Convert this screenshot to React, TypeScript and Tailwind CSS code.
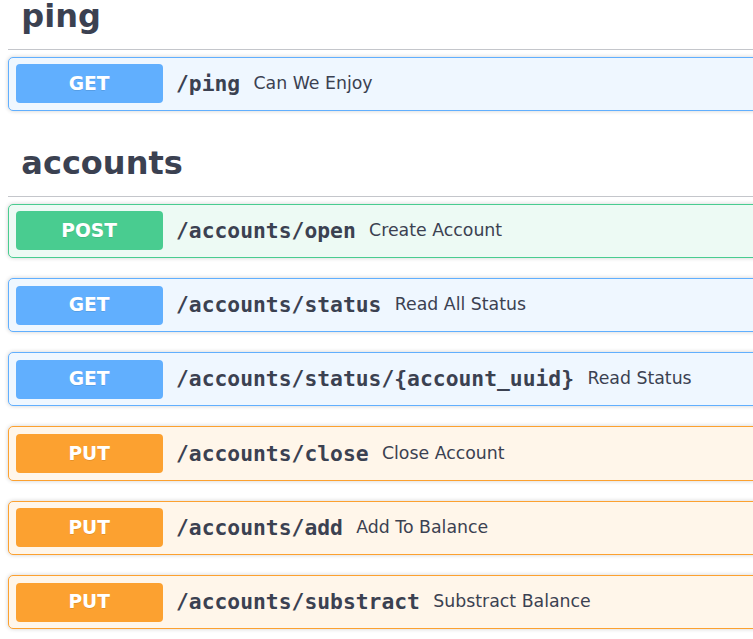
import React from "react";

type Method = "GET" | "POST" | "PUT";

const tone: Record<Method, { box: string; badge: string }> = {
  GET: { box: "border-[#61affe] bg-[#eff7ff]", badge: "bg-[#61affe]" },
  POST: { box: "border-[#49cc90] bg-[#edfaf4]", badge: "bg-[#49cc90]" },
  PUT: { box: "border-[#fca130] bg-[#fff6ea]", badge: "bg-[#fca130]" },
};

const sections: { tag: string; ops: { method: Method; path: string; summary: string }[] }[] = [
  { tag: "ping", ops: [{ method: "GET", path: "/ping", summary: "Can We Enjoy" }] },
  {
    tag: "accounts",
    ops: [
      { method: "POST", path: "/accounts/open", summary: "Create Account" },
      { method: "GET", path: "/accounts/status", summary: "Read All Status" },
      { method: "GET", path: "/accounts/status/{account_uuid}", summary: "Read Status" },
      { method: "PUT", path: "/accounts/close", summary: "Close Account" },
      { method: "PUT", path: "/accounts/add", summary: "Add To Balance" },
      { method: "PUT", path: "/accounts/substract", summary: "Substract Balance" },
    ],
  },
];

function Opblock({ method, path, summary }: { method: Method; path: string; summary: string }) {
  const t = tone[method];
  return (
    <div className={`mb-[20px] rounded-[5px] border shadow-[0_0_4px_rgba(0,0,0,0.19)] ${t.box}`}>
      <div className="flex items-center p-[6.67px]">
        <span className={`flex h-[39px] w-[147px] shrink-0 items-center justify-center rounded-[4px] text-[18.67px] font-bold text-white [text-shadow:0_1px_0_rgba(0,0,0,0.1)] ${t.badge}`}>
          {method}
        </span>
        <span className="px-[13.33px] font-['DejaVu_Sans_Mono',monospace] text-[21.33px] font-bold text-[#3b4151]">{path}</span>
        <span className="text-[17.33px] text-[#3b4151]">{summary}</span>
      </div>
    </div>
  );
}

export default function App() {
  return (
    <div className="h-[639px] w-[753px] overflow-hidden bg-white font-['DejaVu_Sans',sans-serif]">
      <div className="-mt-[16px] ml-[8px] w-[1100px]">
        {sections.map((s) => (
          <section key={s.tag}>
            <h3 className="mb-[6.67px] border-b border-[#c4c6cb] py-[13.33px] pl-[13.33px] text-[32px] font-bold leading-[38.3px] text-[#3b4151]">
              {s.tag}
            </h3>
            {s.ops.map((op) => (
              <Opblock key={op.path} {...op} />
            ))}
          </section>
        ))}
      </div>
    </div>
  );
}
